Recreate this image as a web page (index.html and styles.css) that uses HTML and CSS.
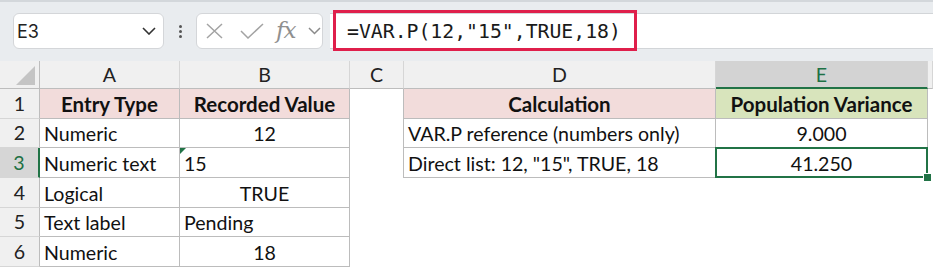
FILE: index.html
```html
<!DOCTYPE html>
<html lang="en">
<head>
    <meta charset="UTF-8">
    <title>VAR.P</title>
    <link rel="stylesheet" href="styles.css">
</head>
<body>
    <div class="toolbar">
        <div class="namebox">
            <span>E3</span>
            <svg class="chev" width="14" height="8" viewBox="0 0 14 8"><path d="M1 1 L7 7 L13 1" fill="none" stroke="#333" stroke-width="1.6"/></svg>
        </div>
        <div class="grip"><span></span><span></span><span></span></div>
        <div class="fxbox">
            <svg width="20" height="16" viewBox="0 0 20 16"><path d="M2 1 L17 15 M17 1 L2 15" fill="none" stroke="#a3a3a3" stroke-width="1.5"/></svg>
            <svg width="24" height="16" viewBox="0 0 24 16"><path d="M1 8 L8 15 L23 1" fill="none" stroke="#a3a3a3" stroke-width="1.5"/></svg>
            <span class="fx">fx</span>
            <svg width="13" height="8" viewBox="0 0 13 8"><path d="M1 1 L6.5 6.5 L12 1" fill="none" stroke="#8a8a8a" stroke-width="1.5"/></svg>
        </div>
        <div class="formula">
            <span class="formula-text">=VAR.P(12,"15",TRUE,18)</span>
        </div>
    </div>

    <div class="sheet">
        <div class="colhead corner"><span class="tri"></span></div>
        <div class="colhead">A</div>
        <div class="colhead">B</div>
        <div class="colhead">C</div>
        <div class="colhead">D</div>
        <div class="colhead sel">E</div>
        <div class="colhead"></div>

        <div class="rowhead">1</div>
        <div class="cell tb pink bold center">Entry Type</div>
        <div class="cell tb pink bold center">Recorded Value</div>
        <div class="cell edge"></div>
        <div class="cell tb pink bold center">Calculation</div>
        <div class="cell tb green bold center">Population Variance</div>
        <div class="cell"></div>

        <div class="rowhead">2</div>
        <div class="cell tb">Numeric</div>
        <div class="cell tb center">12</div>
        <div class="cell edge"></div>
        <div class="cell tb">VAR.P reference (numbers only)</div>
        <div class="cell tb center">9.000</div>
        <div class="cell"></div>

        <div class="rowhead sel">3</div>
        <div class="cell tb">Numeric text</div>
        <div class="cell tb flag">15</div>
        <div class="cell edge"></div>
        <div class="cell tb">Direct list: 12, "15", TRUE, 18</div>
        <div class="cell tb center active">41.250</div>
        <div class="cell"></div>

        <div class="rowhead">4</div>
        <div class="cell tb">Logical</div>
        <div class="cell tb center">TRUE</div>
        <div class="cell"></div>
        <div class="cell"></div>
        <div class="cell"></div>
        <div class="cell"></div>

        <div class="rowhead">5</div>
        <div class="cell tb">Text label</div>
        <div class="cell tb">Pending</div>
        <div class="cell"></div>
        <div class="cell"></div>
        <div class="cell"></div>
        <div class="cell"></div>

        <div class="rowhead">6</div>
        <div class="cell tb">Numeric</div>
        <div class="cell tb center">18</div>
        <div class="cell"></div>
        <div class="cell"></div>
        <div class="cell"></div>
        <div class="cell"></div>
    </div>
</body>
</html>
```

FILE: styles.css
```css
body {
    margin: 0;
    width: 933px;
    height: 269px;
    overflow: hidden;
    background: #ffffff;
    font-family: 'Lato', 'Noto Sans', sans-serif;
    color: #111;
}
.toolbar {
    height: 61px;
    box-sizing: border-box;
    display: flex;
    align-items: flex-start;
    padding: 11px 0 0 13px;
    background: #e9ecef;
    border-top: 2px solid #d3d7db;
}
.namebox {
    width: 151px;
    height: 36px;
    box-sizing: border-box;
    display: flex;
    align-items: center;
    justify-content: space-between;
    padding: 0 7px 0 3px;
    background: #fff;
    border: 1px solid #d4d6d9;
    border-radius: 6px;
    font-family: 'Inter', 'Noto Sans', sans-serif;
    font-size: 18px;
    color: #222;
}
.grip {
    width: 32px;
    height: 36px;
    display: flex;
    flex-direction: column;
    align-items: center;
    justify-content: center;
    gap: 2px;
}
.grip span {
    width: 3px;
    height: 3px;
    background: #555;
    border-radius: 50%;
}
.fxbox {
    width: 127px;
    height: 36px;
    box-sizing: border-box;
    display: flex;
    align-items: center;
    padding: 0 0 0 8px;
    background: #fff;
    border: 1px solid #d4d6d9;
    border-radius: 6px;
}
.fxbox svg:nth-child(2) {
    margin-left: 15px;
}
.fxbox .fx {
    font-family: 'DejaVu Serif', 'Liberation Serif', serif;
    font-style: italic;
    font-size: 23px;
    line-height: 1;
    color: #8f8f8f;
    margin: 0 13px 2px 12px;
    letter-spacing: -1px;
}
.formula {
    position: relative;
    flex: 1;
    height: 36px;
    margin-left: 7px;
    box-sizing: border-box;
    display: flex;
    align-items: center;
    padding-left: 17px;
    background: #fff;
    border-top: 1px solid #d2d5d8;
    border-bottom: 1px solid #d2d5d8;
}
.formula::after {
    content: '';
    position: absolute;
    left: 3px;
    top: -4px;
    width: 304px;
    height: 41px;
    box-sizing: border-box;
    border: 3px solid #df1f4b;
}
.formula-text {
    font-family: 'DejaVu Sans Mono', monospace;
    font-size: 19.8px;
    color: #1a1a1a;
}
.sheet {
    display: grid;
    grid-template-columns: 40px 140px 170px 54px 312px 212px 5px;
    grid-template-rows: 28px repeat(6, 29.67px);
    font-size: 19.6px;
}
.colhead {
    background: #f0f0f0;
    border-right: 1px solid #d6d6d6;
    border-bottom: 1px solid #bdbdbd;
    box-sizing: border-box;
    display: flex;
    align-items: center;
    justify-content: center;
    color: #222;
}
.colhead.sel {
    background: #d3d3d3;
    color: #1e7145;
    border-bottom: 2px solid #217346;
}
.corner {
    justify-content: flex-end;
    align-items: flex-end;
    padding: 0 4px 3px 0;
    border-right-color: #bdbdbd;
}
.tri {
    width: 19px;
    height: 19px;
    background: #c4c4c4;
    clip-path: polygon(100% 0, 100% 100%, 0 100%);
}
.rowhead {
    background: #f0f0f0;
    border-right: 1px solid #bdbdbd;
    border-bottom: 1px solid #d6d6d6;
    box-sizing: border-box;
    display: flex;
    align-items: center;
    justify-content: center;
    color: #222;
}
.rowhead.sel {
    background: #d6d6d6;
    color: #1e7145;
    border-right: 2px solid #217346;
}
.cell {
    box-sizing: border-box;
    display: flex;
    align-items: center;
    padding: 2px 0 0 4px;
    white-space: nowrap;
}
.cell.tb {
    border-right: 1px solid #bcbcbc;
    border-bottom: 1px solid #bcbcbc;
}
.cell.edge {
    border-right: 1px solid #bcbcbc;
}
.pink { background: #f2dcdb; }
.green { background: #d8e4bc; }
.bold {
    font-weight: 700;
    font-size: 20.5px;
}
.center {
    justify-content: center;
    padding-left: 0;
}
.flag {
    position: relative;
}
.flag::before {
    content: '';
    position: absolute;
    left: 0;
    top: 0;
    border-top: 6px solid #217346;
    border-right: 6px solid transparent;
}
.active {
    position: relative;
}
.active::after {
    content: '';
    position: absolute;
    left: -1px;
    top: -1px;
    right: -1px;
    bottom: -1px;
    border: 2px solid #217346;
}
.active::before {
    content: '';
    position: absolute;
    right: -5px;
    bottom: -5px;
    width: 7px;
    height: 7px;
    background: #217346;
    border: 1px solid #fff;
    z-index: 1;
}
```
